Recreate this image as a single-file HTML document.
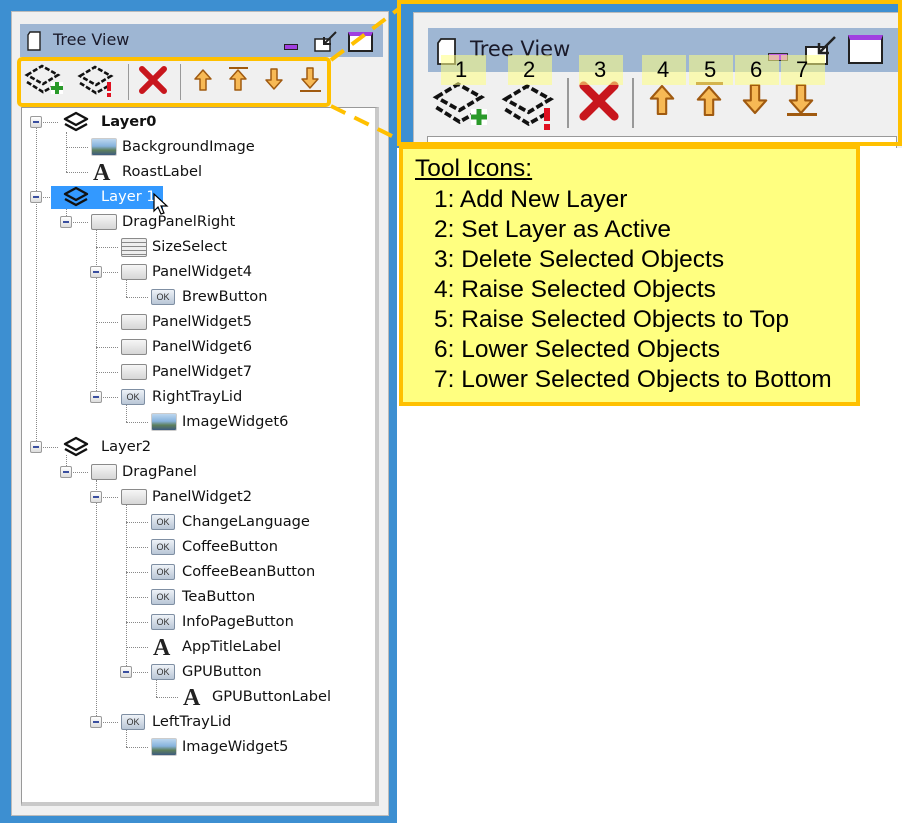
<!DOCTYPE html>
<html><head><meta charset="utf-8"><style>
*{margin:0;padding:0;box-sizing:border-box}
body{width:902px;height:823px;position:relative;background:#fff;overflow:hidden;font-family:"DejaVu Sans","Liberation Sans",sans-serif}
.a{position:absolute}
.r{position:absolute;height:22px;font-size:14.6px;line-height:22px;color:#111;white-space:nowrap}
.ex{position:absolute;width:12px;height:12px;border:1px solid #9a9a9a;background:linear-gradient(#fff,#ddd);border-radius:2px}
.ex:after{content:"";position:absolute;left:2px;top:4px;width:6px;height:2px;background:#3a4fa0}
.hl{position:absolute;height:0;border-top:1px dotted #888}
.vl{position:absolute;width:0;border-left:1px dotted #888}
.ok{position:absolute;width:24px;height:16px;border:1px solid #7f8fa3;background:linear-gradient(#eef2f7,#b9c6d6);font:9px "Liberation Sans",sans-serif;color:#333;text-align:center;line-height:14px;border-radius:2px}
.pn{position:absolute;width:26px;height:16px;border:1px solid #8a8a8a;background:linear-gradient(#f6f6f6,#d6d6d6);border-radius:2px}
.im{position:absolute;width:26px;height:18px;border:1px solid #ccc;background:linear-gradient(#bcd7ef 0%,#86b2dc 45%,#5d7f5c 70%,#3d5a80 100%);border-radius:2px}
.AA{position:absolute;font:bold 24px "Liberation Serif",serif;color:#222;line-height:22px}
.t{position:absolute}
</style></head><body>
<svg width="0" height="0" style="position:absolute"><defs>
<symbol id="lay" viewBox="0 0 30 22"><path d="M4 13 L15 19 L26 13 M4 8 L15 2 L26 8 L15 14 Z" fill="none" stroke="#111" stroke-width="2.4" stroke-linejoin="round"/></symbol>
<symbol id="layd" viewBox="0 0 40 34"><path d="M3 20 L19 30 L33 22" fill="none" stroke="#111" stroke-width="2.6" stroke-dasharray="5 2"/><path d="M3 13 L18 4 L34 13 L19 22 Z" fill="none" stroke="#111" stroke-width="2.6" stroke-dasharray="5 2"/></symbol>
<symbol id="up" viewBox="0 0 20 24"><path d="M10 2 L18 11 L13 11 L13 22 L7 22 L7 11 L2 11 Z" fill="#f7b955" stroke="#a05a10" stroke-width="1.5" stroke-linejoin="round"/></symbol>
<symbol id="dn" viewBox="0 0 20 24"><path d="M10 22 L18 13 L13 13 L13 2 L7 2 L7 13 L2 13 Z" fill="#f7b955" stroke="#a05a10" stroke-width="1.5" stroke-linejoin="round"/></symbol>
<symbol id="x" viewBox="0 0 30 30"><path d="M4 4 L26 26 M26 4 L4 26" stroke="#c8161d" stroke-width="6" stroke-linecap="round"/></symbol>
</defs></svg>

<!-- LEFT PANEL -->
<div class="a" style="left:0;top:0;width:397px;height:823px;background:#3d8fd1"></div>
<div class="a" style="left:11px;top:11px;width:378px;height:805px;background:#f0f0f0;border:1px solid #bbb"></div>
<div class="a" style="left:20px;top:24px;width:363px;height:33px;background:#9eb6d3"></div>
<svg class="a" style="left:26px;top:31px" width="16" height="20"><path d="M4 1 H14 V19 H2 V4 Z" fill="#fff" stroke="#222" stroke-width="1.4"/></svg>
<div class="t" style="left:53px;top:30px;font-size:16px;color:#1a1a2a">Tree View</div>
<div class="a" style="left:284px;top:44px;width:14px;height:6px;background:#a040e0;border:1px solid #222"></div>
<svg class="a" style="left:312px;top:29px" width="28" height="24"><rect x="3" y="10" width="15" height="12" fill="#fff" stroke="#222" stroke-width="1.5"/><path d="M24 3 L12 15 M12 8 V15 H19" stroke="#222" stroke-width="2" fill="none"/></svg>
<div class="a" style="left:348px;top:32px;width:25px;height:20px;background:#fff;border:2px solid #222;border-top:4px solid #a040e0"></div>
<!-- toolbar -->
<svg class="a" style="left:24px;top:62px" width="40" height="34"><use href="#layd"/><rect x="27" y="20" width="12" height="12" fill="#fff"/><path d="M33 20 V32 M27 26 H39" stroke="#2a9a2a" stroke-width="4"/></svg>
<svg class="a" style="left:77px;top:62px" width="40" height="36"><use href="#layd"/><rect x="30" y="20" width="4" height="9" fill="#e01020"/><rect x="30" y="31" width="4" height="4" fill="#e01020"/></svg>
<div class="a" style="left:128px;top:64px;width:1px;height:36px;background:#999"></div>
<svg class="a" style="left:138px;top:65px" width="30" height="30"><use href="#x"/></svg>
<div class="a" style="left:180px;top:64px;width:1px;height:36px;background:#999"></div>
<svg class="a" style="left:193px;top:68px" width="20" height="24"><use href="#up"/></svg>
<svg class="a" style="left:228px;top:68px" width="20" height="24"><use href="#up"/></svg>
<div class="a" style="left:229px;top:67px;width:19px;height:2px;background:#a05a10"></div>
<svg class="a" style="left:264px;top:67px" width="20" height="24"><use href="#dn"/></svg>
<svg class="a" style="left:300px;top:66px" width="20" height="24"><use href="#dn"/></svg>
<div class="a" style="left:300px;top:90px;width:21px;height:2px;background:#a05a10"></div>
<div class="a" style="left:17px;top:57px;width:314px;height:50px;border:4px solid #ffc000;border-radius:5px"></div>
<!-- tree area -->
<div class="a" style="left:21px;top:107px;width:358px;height:699px;background:#fff;border:1px solid #999;border-right:4px solid #c9c9c9;border-bottom:4px solid #c9c9c9"></div>

<div class="vl" style="left:36px;top:128px;height:319px"></div>
<div class="vl" style="left:66px;top:132px;height:40px"></div>
<div class="vl" style="left:66px;top:207px;height:15px"></div>
<div class="vl" style="left:96px;top:230px;height:167px"></div>
<div class="vl" style="left:126px;top:280px;height:17px"></div>
<div class="vl" style="left:126px;top:405px;height:17px"></div>
<div class="vl" style="left:66px;top:455px;height:17px"></div>
<div class="vl" style="left:96px;top:480px;height:242px"></div>
<div class="vl" style="left:126px;top:505px;height:167px"></div>
<div class="vl" style="left:156px;top:680px;height:17px"></div>
<div class="vl" style="left:126px;top:730px;height:17px"></div>

<div class="hl" style="left:36px;top:122px;width:22px"></div>
<div class="hl" style="left:66px;top:147px;width:22px"></div>
<div class="hl" style="left:66px;top:172px;width:22px"></div>
<div class="hl" style="left:36px;top:197px;width:22px"></div>
<div class="hl" style="left:66px;top:222px;width:22px"></div>
<div class="hl" style="left:96px;top:247px;width:22px"></div>
<div class="hl" style="left:96px;top:272px;width:22px"></div>
<div class="hl" style="left:126px;top:297px;width:22px"></div>
<div class="hl" style="left:96px;top:322px;width:22px"></div>
<div class="hl" style="left:96px;top:347px;width:22px"></div>
<div class="hl" style="left:96px;top:372px;width:22px"></div>
<div class="hl" style="left:96px;top:397px;width:22px"></div>
<div class="hl" style="left:126px;top:422px;width:22px"></div>
<div class="hl" style="left:36px;top:447px;width:22px"></div>
<div class="hl" style="left:66px;top:472px;width:22px"></div>
<div class="hl" style="left:96px;top:497px;width:22px"></div>
<div class="hl" style="left:126px;top:522px;width:22px"></div>
<div class="hl" style="left:126px;top:547px;width:22px"></div>
<div class="hl" style="left:126px;top:572px;width:22px"></div>
<div class="hl" style="left:126px;top:597px;width:22px"></div>
<div class="hl" style="left:126px;top:622px;width:22px"></div>
<div class="hl" style="left:126px;top:647px;width:22px"></div>
<div class="hl" style="left:126px;top:672px;width:22px"></div>
<div class="hl" style="left:156px;top:697px;width:22px"></div>
<div class="hl" style="left:96px;top:722px;width:22px"></div>
<div class="hl" style="left:126px;top:747px;width:22px"></div>

<div class="ex" style="left:30px;top:116px"></div>
<div class="ex" style="left:30px;top:191px"></div>
<div class="ex" style="left:60px;top:216px"></div>
<div class="ex" style="left:90px;top:266px"></div>
<div class="ex" style="left:90px;top:391px"></div>
<div class="ex" style="left:30px;top:441px"></div>
<div class="ex" style="left:60px;top:466px"></div>
<div class="ex" style="left:90px;top:491px"></div>
<div class="ex" style="left:120px;top:666px"></div>
<div class="ex" style="left:90px;top:716px"></div>

<div class="a" style="left:51px;top:186px;width:112px;height:23px;background:#3399ff"></div>

<svg class="a" style="left:61px;top:111px" width="30" height="22"><use href="#lay"/></svg>
<div class="im" style="left:91px;top:138px"></div>
<div class="AA" style="left:93px;top:162px">A</div>
<svg class="a" style="left:61px;top:186px" width="30" height="22"><use href="#lay"/></svg>
<div class="pn" style="left:91px;top:214px"></div>
<div class="pn" style="left:121px;top:238px;height:19px;background:repeating-linear-gradient(#eee 0 3px,#888 3px 4px)"></div>
<div class="pn" style="left:121px;top:264px"></div>
<div class="ok" style="left:151px;top:289px">OK</div>
<div class="pn" style="left:121px;top:314px"></div>
<div class="pn" style="left:121px;top:339px"></div>
<div class="pn" style="left:121px;top:364px"></div>
<div class="ok" style="left:121px;top:389px">OK</div>
<div class="im" style="left:151px;top:413px"></div>
<svg class="a" style="left:61px;top:436px" width="30" height="22"><use href="#lay"/></svg>
<div class="pn" style="left:91px;top:464px"></div>
<div class="pn" style="left:121px;top:489px"></div>
<div class="ok" style="left:151px;top:514px">OK</div>
<div class="ok" style="left:151px;top:539px">OK</div>
<div class="ok" style="left:151px;top:564px">OK</div>
<div class="ok" style="left:151px;top:589px">OK</div>
<div class="ok" style="left:151px;top:614px">OK</div>
<div class="AA" style="left:153px;top:637px">A</div>
<div class="ok" style="left:151px;top:664px">OK</div>
<div class="AA" style="left:183px;top:687px">A</div>
<div class="ok" style="left:121px;top:714px">OK</div>
<div class="im" style="left:151px;top:738px"></div>

<div class="r" style="left:101px;top:111px;font-weight:bold">Layer0</div>
<div class="r" style="left:122px;top:136px">BackgroundImage</div>
<div class="r" style="left:122px;top:161px">RoastLabel</div>
<div class="r" style="left:101px;top:186px;color:#fff">Layer 1</div>
<div class="r" style="left:122px;top:211px">DragPanelRight</div>
<div class="r" style="left:152px;top:236px">SizeSelect</div>
<div class="r" style="left:152px;top:261px">PanelWidget4</div>
<div class="r" style="left:182px;top:286px">BrewButton</div>
<div class="r" style="left:152px;top:311px">PanelWidget5</div>
<div class="r" style="left:152px;top:336px">PanelWidget6</div>
<div class="r" style="left:152px;top:361px">PanelWidget7</div>
<div class="r" style="left:152px;top:386px">RightTrayLid</div>
<div class="r" style="left:182px;top:411px">ImageWidget6</div>
<div class="r" style="left:101px;top:436px">Layer2</div>
<div class="r" style="left:122px;top:461px">DragPanel</div>
<div class="r" style="left:152px;top:486px">PanelWidget2</div>
<div class="r" style="left:182px;top:511px">ChangeLanguage</div>
<div class="r" style="left:182px;top:536px">CoffeeButton</div>
<div class="r" style="left:182px;top:561px">CoffeeBeanButton</div>
<div class="r" style="left:182px;top:586px">TeaButton</div>
<div class="r" style="left:182px;top:611px">InfoPageButton</div>
<div class="r" style="left:182px;top:636px">AppTitleLabel</div>
<div class="r" style="left:182px;top:661px">GPUButton</div>
<div class="r" style="left:212px;top:686px">GPUButtonLabel</div>
<div class="r" style="left:152px;top:711px">LeftTrayLid</div>
<div class="r" style="left:182px;top:736px">ImageWidget5</div>

<svg class="a" style="left:152px;top:192px" width="20" height="26"><path d="M2 2 L2 19 L6 15 L9 22 L12 21 L9 14 L15 14 Z" fill="#fff" stroke="#000" stroke-width="1.2"/></svg>

<svg class="a" style="left:325px;top:0" width="80" height="150"><path d="M6 60 L75 8" stroke="#ffc000" stroke-width="4" stroke-dasharray="16 10"/><path d="M6 106 L75 140" stroke="#ffc000" stroke-width="4" stroke-dasharray="16 10"/></svg>

<!-- RIGHT ZOOM -->
<div class="a" style="left:397px;top:0;width:505px;height:148px;background:#3d8fd1;overflow:hidden">
 <div class="a" style="left:16px;top:12px;width:490px;height:140px;background:#f0f0f0;border:1px solid #bbb"></div>
 <div class="a" style="left:31px;top:28px;width:470px;height:44px;background:#9eb6d3"></div>
 <svg class="a" style="left:38px;top:38px" width="22" height="28"><path d="M6 1 H20 V26 H3 V5 Z" fill="#fff" stroke="#222" stroke-width="1.8"/></svg>
 <div class="t" style="left:73px;top:37px;font-size:21px;color:#1a1a2a">Tree View</div>
 <div class="a" style="left:371px;top:53px;width:20px;height:8px;background:#c060e0;border:1px solid #333"></div>
 <svg class="a" style="left:406px;top:33px" width="36" height="34"><rect x="3" y="14" width="21" height="17" fill="#fff" stroke="#222" stroke-width="2"/><path d="M32 4 L16 20 M16 10 V20 H26" stroke="#222" stroke-width="2.5" fill="none"/></svg>
 <div class="a" style="left:451px;top:35px;width:35px;height:29px;background:#fff;border:2px solid #222;border-top:5px solid #a040e0"></div>
 <svg class="a" style="left:35px;top:78px" width="58" height="50"><use href="#layd"/><rect x="39" y="31" width="16" height="16" fill="#fff"/><path d="M47 31 V47 M39 39 H55" stroke="#2a9a2a" stroke-width="5"/></svg>
 <svg class="a" style="left:104px;top:78px" width="58" height="54"><use href="#layd"/><rect x="43" y="30" width="6" height="13" fill="#e01020"/><rect x="43" y="46" width="6" height="6" fill="#e01020"/></svg>
 <div class="a" style="left:170px;top:78px;width:2px;height:50px;background:#999"></div>
 <svg class="a" style="left:181px;top:80px" width="42" height="42"><use href="#x"/></svg>
 <div class="a" style="left:235px;top:78px;width:2px;height:50px;background:#999"></div>
 <svg class="a" style="left:251px;top:83px" width="28" height="34"><use href="#up"/></svg>
 <svg class="a" style="left:298px;top:84px" width="28" height="34"><use href="#up"/></svg>
 <div class="a" style="left:299px;top:82px;width:27px;height:3px;background:#a05a10"></div>
 <svg class="a" style="left:344px;top:82px" width="28" height="34"><use href="#dn"/></svg>
 <svg class="a" style="left:390px;top:82px" width="28" height="34"><use href="#dn"/></svg>
 <div class="a" style="left:390px;top:113px;width:30px;height:3px;background:#a05a10"></div>
 <div class="a" style="left:30px;top:136px;width:470px;height:20px;background:#fff;border:1px solid #999"></div>
 <div class="a" style="left:44px;top:55px;width:45px;height:30px;background:rgba(255,255,130,.55)"></div>
 <div class="a" style="left:111px;top:55px;width:44px;height:30px;background:rgba(255,255,130,.55)"></div>
 <div class="a" style="left:182px;top:55px;width:44px;height:30px;background:rgba(255,255,130,.55)"></div>
 <div class="a" style="left:245px;top:55px;width:44px;height:30px;background:rgba(255,255,130,.55)"></div>
 <div class="a" style="left:292px;top:55px;width:44px;height:30px;background:rgba(255,255,130,.55)"></div>
 <div class="a" style="left:338px;top:55px;width:44px;height:30px;background:rgba(255,255,130,.55)"></div>
 <div class="a" style="left:384px;top:55px;width:44px;height:30px;background:rgba(255,255,130,.55)"></div>
 <div class="t" style="left:58px;top:57px;font:22px 'Liberation Sans',sans-serif">1</div>
 <div class="t" style="left:126px;top:57px;font:22px 'Liberation Sans',sans-serif">2</div>
 <div class="t" style="left:197px;top:57px;font:22px 'Liberation Sans',sans-serif">3</div>
 <div class="t" style="left:260px;top:57px;font:22px 'Liberation Sans',sans-serif">4</div>
 <div class="t" style="left:307px;top:57px;font:22px 'Liberation Sans',sans-serif">5</div>
 <div class="t" style="left:353px;top:57px;font:22px 'Liberation Sans',sans-serif">6</div>
 <div class="t" style="left:399px;top:57px;font:22px 'Liberation Sans',sans-serif">7</div>
 <div class="a" style="left:0;top:0;width:505px;height:146px;border:4px solid #ffc000"></div>
</div>

<!-- callout -->
<div class="a" style="left:399px;top:145px;width:461px;height:261px;background:#ffff80;border:4px solid #ffc000;font:24.5px 'Liberation Sans',sans-serif;color:#000">
 <div class="t" style="left:12px;top:6px;text-decoration:underline">Tool Icons:</div>
 <div class="t" style="left:31px;top:36px;line-height:30px;white-space:nowrap">1: Add New Layer<br>2: Set Layer as Active<br>3: Delete Selected Objects<br>4: Raise Selected Objects<br>5: Raise Selected Objects to Top<br>6: Lower Selected Objects<br>7: Lower Selected Objects to Bottom</div>
</div>
</body></html>
